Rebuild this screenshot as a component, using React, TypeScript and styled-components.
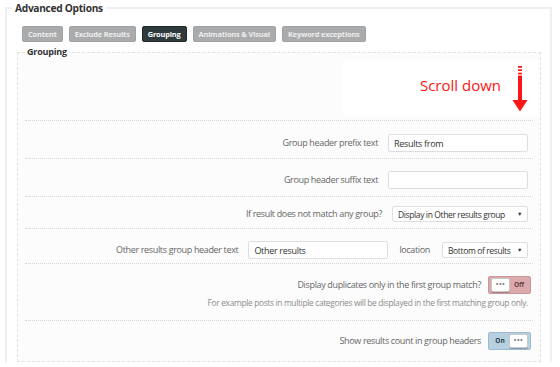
import React from "react";
import styled, { createGlobalStyle } from "styled-components";

const FONT = `"Open Sans", "Noto Sans", Arial, sans-serif`;

const GlobalStyle = createGlobalStyle`
  html, body { margin: 0; padding: 0; background: #fff; }
  body { font-family: ${FONT}; color: #333; width: 560px; height: 367px; overflow: hidden; }
  *, *::before, *::after { box-sizing: border-box; }
`;

const Outer = styled.fieldset`
  margin: 0 0 0 5px;
  width: 547px;
  min-width: 0;
  border: 2px solid #efefef;
  border-bottom: none;
  padding: 10px 0 0 15px;
`;

const OuterLegend = styled.legend`
  margin-left: -10px;
  padding: 0 3px;
  font: bold 10.2px/16px ${FONT};
  letter-spacing: -0.3px;
  color: #333;
`;

const Tabs = styled.div`
  display: flex;
  gap: 6px;
  height: 16px;
`;

const Tab = styled.div<{ $active?: boolean }>`
  height: 16px;
  padding: 0 5px;
  display: flex;
  align-items: center;
  border-radius: 2px;
  font: bold 7.4px/16px ${FONT};
  letter-spacing: -0.15px;
  color: ${(p) => (p.$active ? "#ffffff" : "#eeeeee")};
  background: ${(p) => (p.$active ? "#2f3b3d" : "#a9abac")};
  border: 1px solid ${(p) => (p.$active ? "#1f2a2c" : "#a0a2a3")};
  white-space: nowrap;
`;

const Inner = styled.fieldset`
  margin: 4px 0 0 -5px;
  width: 524px;
  min-width: 0;
  border: 1px dashed #e2e2e2;
  padding: 0 7px;
  background: #fcfcfc;
`;

const InnerLegend = styled.legend`
  padding: 0 2px;
  font: bold 9px/12px ${FONT};
  letter-spacing: -0.2px;
  color: #333;
`;

const Intro = styled.div`
  position: relative;
  height: 63px;
  display: flex;
  justify-content: flex-end;
  align-items: flex-start;
  padding: 8px 5px 0 0;
  border-bottom: 1px dotted #d4d4d4;
`;

const Highlight = styled.div`
  position: absolute;
  top: 2px;
  bottom: 4px;
  left: 318px;
  right: -7px;
  background: #ffffff;
`;

const ScrollText = styled.span`
  position: relative;
  margin: 10px 11px 0 0;
  font: 15px/18px ${FONT};
  color: #ff1414;
`;

const Arrow = styled.svg`
  position: relative;
  display: block;
`;

const Row = styled.div<{ $pt: number; $pb: number; $last?: boolean }>`
  display: flex;
  flex-direction: column;
  align-items: flex-end;
  padding: ${(p) => p.$pt}px 5px ${(p) => p.$pb}px;
  border-bottom: ${(p) => (p.$last ? "none" : "1px dotted #d4d4d4")};
`;

const Line = styled.div`
  display: flex;
  align-items: center;
  justify-content: flex-end;
`;

const Label = styled.span<{ $gap?: number; $lead?: number }>`
  font: 9px/12px ${FONT};
  letter-spacing: -0.35px;
  color: #666;
  margin-left: ${(p) => p.$lead ?? 0}px;
  margin-right: ${(p) => p.$gap ?? 10}px;
  white-space: nowrap;
`;

const TextInput = styled.input`
  width: 140px;
  height: 18px;
  border: 1px solid #dedede;
  border-radius: 2px;
  background: #fff;
  padding: 0 5px;
  font: 9px ${FONT};
  letter-spacing: -0.3px;
  color: #333;
  outline: none;
`;

const Select = styled.div<{ $w: number }>`
  width: ${(p) => p.$w}px;
  height: 16px;
  border: 1px solid #dedede;
  border-radius: 2px;
  background: #fff;
  padding: 0 5px 0 5px;
  display: flex;
  align-items: center;
  justify-content: space-between;
  font: 8.5px ${FONT};
  letter-spacing: -0.38px;
  color: #333;
  white-space: nowrap;
`;

const Caret = styled.span`
  font-size: 5.5px;
  color: #333;
  margin-left: 4px;
`;

const Toggle = styled.div<{ $on: boolean }>`
  width: 43px;
  height: 18px;
  margin-right: -3px;
  border-radius: 2px;
  padding: 1px 2px;
  display: flex;
  flex-direction: ${(p) => (p.$on ? "row" : "row-reverse")};
  align-items: center;
  justify-content: space-between;
  background: ${(p) => (p.$on ? "#b7d0e0" : "#dcaaac")};
  border: 1px solid ${(p) => (p.$on ? "#9dbad0" : "#c9989b")};
`;

const ToggleText = styled.span<{ $on: boolean }>`
  flex: 1;
  text-align: center;
  font: bold 6.5px/10px ${FONT};
  color: ${(p) => (p.$on ? "#2e3d48" : "#6a4446")};
`;

const Knob = styled.span`
  width: 19px;
  height: 14px;
  border-radius: 2px;
  background: #fff;
  border: 1px solid #c9c9c9;
  box-shadow: 0 1px 0 rgba(0, 0, 0, 0.25);
  display: flex;
  align-items: center;
  justify-content: center;
  font: bold 7px/10px ${FONT};
  color: #888;
  letter-spacing: 0.5px;
`;

const Help = styled.div`
  margin-top: 4px;
  font: 8.4px/10px ${FONT};
  letter-spacing: -0.33px;
  color: #8c8c8c;
  white-space: nowrap;
`;

function Switch({ on }: { on: boolean }) {
  return (
    <Toggle $on={on}>
      <ToggleText $on={on}>{on ? "On" : "Off"}</ToggleText>
      <Knob>•••</Knob>
    </Toggle>
  );
}

export default function App() {
  return (
    <>
      <GlobalStyle />
      <Outer>
        <OuterLegend>Advanced Options</OuterLegend>
        <Tabs>
          <Tab>Content</Tab>
          <Tab>Exclude Results</Tab>
          <Tab $active>Grouping</Tab>
          <Tab>Animations &amp; Visual</Tab>
          <Tab>Keyword exceptions</Tab>
        </Tabs>
        <Inner>
          <InnerLegend>Grouping</InnerLegend>
          <Intro>
            <Highlight />
            <ScrollText>Scroll down</ScrollText>
            <Arrow width="16" height="46" viewBox="0 0 16 46">
              <rect x="6" y="0" width="4" height="1.7" fill="#ff1414" />
              <rect x="6" y="3.3" width="4" height="1.7" fill="#ff1414" />
              <rect x="6" y="6.7" width="4" height="1.7" fill="#ff1414" />
              <rect x="6" y="9.6" width="4" height="25" fill="#ff1414" />
              <polygon points="0.5,34 15.5,34 8,45.5" fill="#ff1414" />
            </Arrow>
          </Intro>
          <Row $pt={13} $pb={6}>
            <Line>
              <Label>Group header prefix text</Label>
              <TextInput defaultValue="Results from" />
            </Line>
          </Row>
          <Row $pt={12} $pb={7}>
            <Line>
              <Label>Group header suffix text</Label>
              <TextInput defaultValue="" />
            </Line>
          </Row>
          <Row $pt={9} $pb={6}>
            <Line>
              <Label>If result does not match any group?</Label>
              <Select $w={136}>
                Display in Other results group <Caret>▼</Caret>
              </Select>
            </Line>
          </Row>
          <Row $pt={12} $pb={4}>
            <Line>
              <Label>Other results group header text</Label>
              <TextInput defaultValue="Other results" />
              <Label $lead={11} $gap={12}>location</Label>
              <Select $w={86}>
                Bottom of results <Caret>▼</Caret>
              </Select>
            </Line>
          </Row>
          <Row $pt={12} $pb={12}>
            <Line>
              <Label $gap={7}>Display duplicates only in the first group match?</Label>
              <Switch on={false} />
            </Line>
            <Help>For example posts in multiple categories will be displayed in the first matching group only.</Help>
          </Row>
          <Row $pt={11} $pb={11} $last>
            <Line>
              <Label $gap={7}>Show results count in group headers</Label>
              <Switch on />
            </Line>
          </Row>
        </Inner>
      </Outer>
    </>
  );
}
